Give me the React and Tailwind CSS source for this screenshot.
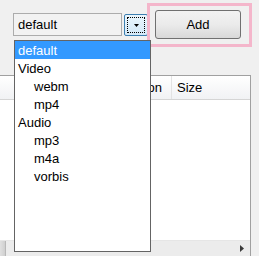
export default function App() {
  const items = [
    { t: "default", sel: true, indent: false },
    { t: "Video", indent: false },
    { t: "webm", indent: true },
    { t: "mp4", indent: true },
    { t: "Audio", indent: false },
    { t: "mp3", indent: true },
    { t: "m4a", indent: true },
    { t: "vorbis", indent: true },
  ];
  return (
    <div
      className="relative w-[259px] h-[256px] overflow-hidden bg-[#f0f0f0] text-[13px] text-black"
      style={{ fontFamily: '"Liberation Sans", Arial, sans-serif' }}
    >
      {/* top row */}
      <div className="flex items-start h-[47px]">
        <div className="ml-[13px] mt-[13px] w-[109px] h-[23px] border border-[#acacac] bg-[#f2f2f2] flex items-center pl-[4px] leading-none">
          default
        </div>
        <div className="ml-[2px] mt-[14px] w-[24px] h-[22px] rounded-[2px] border border-[#3c7fb1] bg-gradient-to-b from-[#eaf6fd] to-[#d3e8f7] p-[2px]">
          <div className="w-full h-full border border-dotted border-black flex items-center justify-center">
            <svg width="5" height="3" viewBox="0 0 5 3">
              <path d="M0 0H5L2.5 3Z" fill="#000" />
            </svg>
          </div>
        </div>
        <div className="-ml-[1px] mt-[3px] w-[105px] h-[44px] border-[3px] border-[#f4b6cb] flex items-start pl-[5px] pt-[4px]">
          <div className="w-[86px] h-[29px] rounded-[3px] border border-[#707070] bg-gradient-to-b from-[#f2f2f2] via-[#ebebeb] to-[#d8d8d8] flex items-center justify-center leading-none">
            Add
          </div>
        </div>
      </div>

      {/* list view panel */}
      <div className="mt-[28px] w-[251px] h-[190px] border-t border-r border-[#a0a0a0] bg-white flex flex-col">
        <div className="h-[24px] flex border-b border-[#d5d5d5] bg-gradient-to-b from-white to-[#f1f2f4]">
          <div className="w-[172px] shrink-0 border-r border-[#e3e3e3] flex items-center justify-end pr-[9px] leading-none">
            Description
          </div>
          <div className="flex items-center pl-[5px] leading-none">Size</div>
        </div>
        <div className="flex-1" />
        <div className="h-[16px] mb-[9px] flex border-t border-[#e6e6e6] bg-[#ececec]">
          <div className="w-[6px] h-full bg-gradient-to-r from-[#e0e0e0] to-[#cfcfcf] border-r border-[#b8b8b8]" />
          <div className="flex-1" />
          <div className="w-[16px] h-full flex items-center justify-center">
            <svg width="4" height="7" viewBox="0 0 4 7">
              <path d="M0 0L4 3.5L0 7Z" fill="#3a3a3a" />
            </svg>
          </div>
        </div>
      </div>

      {/* dropdown list overlay */}
      <div className="absolute left-[14px] top-[40px] w-[137px] h-[212px] border border-[#646464] bg-white">
        {items.map((it) => (
          <div
            key={it.t}
            className={`h-[18px] flex items-center leading-none ${
              it.indent ? "pl-[19px]" : "pl-[3px]"
            } ${it.sel ? "bg-[#3399ff] text-white" : ""}`}
          >
            {it.t}
          </div>
        ))}
      </div>
    </div>
  );
}
